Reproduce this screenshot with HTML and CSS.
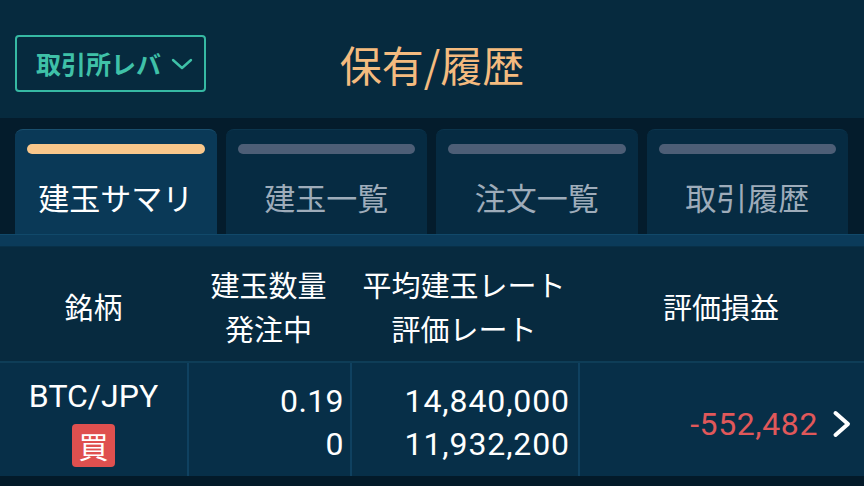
FILE: index.html
```html
<!DOCTYPE html>
<html lang="ja">
<head>
<meta charset="utf-8">
<link rel="stylesheet" href="styles.css">
</head>
<body>
<div class="app">
  <header class="header">
    <div class="left">
      <button class="mode">取引所レバ<svg class="chev" viewBox="0 0 22 12" width="22" height="12"><path d="M2 2 L11 10 L20 2" fill="none" stroke="currentColor" stroke-width="2.4" stroke-linecap="round" stroke-linejoin="round"/></svg></button>
    </div>
    <h1 class="title">保有/履歴</h1>
    <div class="right"></div>
  </header>
  <div class="gap"></div>
  <nav class="tabs">
    <div class="tab active"><span class="bar"></span><span class="label">建玉サマリ</span></div>
    <div class="tab"><span class="bar"></span><span class="label">建玉一覧</span></div>
    <div class="tab"><span class="bar"></span><span class="label">注文一覧</span></div>
    <div class="tab"><span class="bar"></span><span class="label">取引履歴</span></div>
  </nav>
  <div class="stripe"></div>
  <div class="thead">
    <div class="th c1">銘柄</div>
    <div class="th c2">建玉数量<br>発注中</div>
    <div class="th c3">平均建玉レート<br>評価レート</div>
    <div class="th c4">評価損益</div>
  </div>
  <div class="row">
    <div class="td c1"><span class="pair">BTC/JPY</span><span class="badge">買</span></div>
    <div class="td c2 num"><span>0.19</span><span>0</span></div>
    <div class="td c3 num"><span>14,840,000</span><span>11,932,200</span></div>
    <div class="td c4"><span class="pl">-552,482</span><svg class="go" viewBox="0 0 20 28" width="20" height="28"><path d="M3.5 3 L16 14 L3.5 25" fill="none" stroke="#fff" stroke-width="4" stroke-linecap="round" stroke-linejoin="round"/></svg></div>
  </div>
</div>
</body>
</html>
```
FILE: styles.css
```css
* { box-sizing: border-box; }
html, body { margin: 0; padding: 0; }
body {
  width: 864px;
  height: 486px;
  overflow: hidden;
  background: #031a29;
  font-family: "Noto Sans CJK JP", "Noto Sans", sans-serif;
  color: #fff;
}
.app { display: flex; flex-direction: column; height: 486px; }

.header {
  height: 118px;
  background: #062a3e;
  display: grid;
  grid-template-columns: 1fr auto 1fr;
  align-items: center;
  padding: 0 15px;
}
.left { display: flex; align-items: center; padding-top: 9px; }
.mode {
  width: 191px;
  height: 57px;
  border: 2px solid #36b9a3;
  border-radius: 4px;
  background: transparent;
  color: #3fc1a8;
  font-family: "Noto Sans CJK JP", sans-serif;
  font-weight: 700;
  font-size: 25px;
  display: flex;
  align-items: center;
  justify-content: center;
  gap: 10px;
  padding: 0 0 2px 8px;
  letter-spacing: 0;
}
.chev { color: #3fc1a8; margin-top: 2px; }
.title {
  margin: 0;
  font-weight: 400;
  font-size: 42px;
  color: #f4bb7f;
  padding-top: 9px;
  letter-spacing: 0;
}

.gap { height: 11px; background: #041c2c; }

.tabs {
  display: flex;
  gap: 9px;
  padding: 0 16px 0 15px;
  background: #041c2c;
  height: 105px;
}
.tab {
  flex: 1;
  background: #062b42;
  border-radius: 8px 8px 0 0;
  border-top: 1px solid #0b344c;
  display: flex;
  flex-direction: column;
  padding: 14px 12px 0;
}
.tab.active { background: #0a3957; border-top: 1px solid #1a4f6e; }
.bar {
  height: 10px;
  border-radius: 5px;
  background: #4d5e76;
}
.tab.active .bar { background: #f9c78b; }
.label {
  text-align: center;
  font-size: 31px;
  line-height: 40px;
  margin-top: 23px;
  color: #9eacba;
}
.tab.active .label { color: #fff; }

.stripe {
  height: 13px;
  background: #0b3b5a;
  border-top: 1px solid #11496a;
  border-bottom: 1px solid #083048;
}

.thead {
  height: 116px;
  background: #072a3f;
  display: grid;
  grid-template-columns: 187px 163px 228px 1fr;
  border-bottom: 2px solid #0e3d57;
}
.th {
  display: flex;
  align-items: center;
  justify-content: center;
  text-align: center;
  font-size: 29px;
  line-height: 44px;
  padding-top: 4px;
}

.row {
  height: 113px;
  background: #072f48;
  display: grid;
  grid-template-columns: 187px 163px 228px 1fr;
}
.td { border-left: 2px solid #0f4160; }
.td.c1 { border-left: 0; display: flex; flex-direction: column; align-items: center; padding-top: 14px; }
.pair { font-family: Roboto, sans-serif; font-size: 32px; line-height: 38px; }
.badge {
  margin-top: 9px;
  width: 43px;
  height: 43px;
  background: #df504f;
  border-radius: 4px;
  color: #fff;
  font-size: 30px;
  line-height: 42px;
  text-align: center;
}
.num {
  display: flex;
  flex-direction: column;
  align-items: flex-end;
  justify-content: center;
  font-family: Roboto, sans-serif;
  font-size: 32px;
  line-height: 43px;
  padding-right: 6px;
  padding-top: 6px;
  letter-spacing: 0.4px;
}
.td.c3 { padding-right: 8px; letter-spacing: 0.9px; }
.td.c4 {
  display: flex;
  align-items: center;
  justify-content: flex-end;
  padding-right: 12px;
  padding-top: 8px;
}
.pl { font-family: Roboto, sans-serif; font-size: 32px; color: #e0585a; margin-right: 14px; letter-spacing: 0.6px; }
```
